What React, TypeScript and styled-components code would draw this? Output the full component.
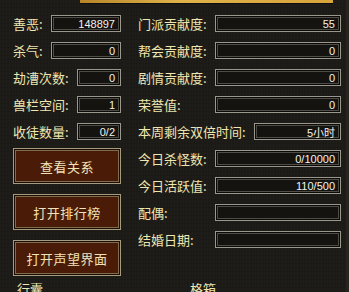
import { FunctionComponent } from "react";
import styled, { createGlobalStyle } from "styled-components";

const GlobalStyle = createGlobalStyle`
  html, body {
    margin: 0;
    padding: 0;
    background: #1b1a17;
  }
`;

const Panel = styled.div`
  width: 349px;
  height: 292px;
  overflow: hidden;
  position: relative;
  background-color: #1c1b18;
  background-image: repeating-linear-gradient(
      90deg,
      rgba(255, 255, 255, 0.012) 0px,
      rgba(255, 255, 255, 0.012) 1px,
      transparent 1px,
      transparent 3px
    ),
    repeating-linear-gradient(
      0deg,
      rgba(0, 0, 0, 0.08) 0px,
      rgba(0, 0, 0, 0.08) 1px,
      transparent 1px,
      transparent 4px
    );
  font-family: "Noto Sans CJK SC", "Noto Sans", sans-serif;
  font-size: 13px;
  color: #efe6b0;
  border-right: 3px solid #26241f;
  box-sizing: border-box;
`;

const TopStrip = styled.div`
  margin-left: 80px;
  width: 253px;
  height: 3px;
  background: linear-gradient(90deg, #b8862a, #e0b24a 40%, #d8a43c);
  border-bottom: 1px solid #0e0d0b;
`;

const Columns = styled.div`
  display: flex;
  gap: 17px;
  padding: 11px 0 0 13px;
`;

const LeftCol = styled.div`
  width: 108px;
  display: flex;
  flex-direction: column;
  gap: 8px;
`;

const RightCol = styled.div`
  width: 203px;
  display: flex;
  flex-direction: column;
  gap: 10px;
`;

const Stack = styled.div`
  display: flex;
  flex-direction: column;
  gap: 10px;
`;

const Row = styled.div`
  height: 17px;
  display: flex;
  align-items: center;
`;

const Label = styled.span<{ $min?: number }>`
  flex: none;
  min-width: ${(p) => (p.$min ? `${p.$min}px` : "auto")};
  padding-right: 8px;
  box-sizing: border-box;
  white-space: nowrap;
  line-height: 17px;
  color: #efe6b0;
`;

const ValueBox = styled.div`
  flex: 1;
  height: 17px;
  box-sizing: border-box;
  border: 1px solid #9a978c;
  background: #141310;
  box-shadow: inset 0 0 0 1px #0b0a09, inset 0 0 0 2px #4e4c45;
  display: flex;
  align-items: center;
  justify-content: flex-end;
  padding-right: 5px;
  font-family: "Liberation Sans", "Noto Sans CJK SC", sans-serif;
  font-size: 11px;
  color: #f2f2ee;
`;

const ActionButton = styled.button`
  height: 36px;
  width: 108px;
  box-sizing: border-box;
  border: 1px solid #a89b7c;
  background: #4a1c07;
  box-shadow: inset 0 0 0 1px #1c0d04, inset 0 0 0 2px #7e6c50;
  color: #f2e2b8;
  font-family: "Noto Sans CJK SC", sans-serif;
  font-size: 13px;
  letter-spacing: 0.5px;
  padding: 0;
  cursor: pointer;
`;

const Footer = styled.div`
  display: flex;
  padding: 4px 0 0 17px;
  line-height: 17px;
`;

const FooterLabel = styled.span<{ $w: number }>`
  width: ${(p) => p.$w}px;
  color: #efe6b0;
`;

const leftRows = [
  { label: "善恶:", value: "148897" },
  { label: "杀气:", value: "0" },
  { label: "劫漕次数:", value: "0" },
  { label: "兽栏空间:", value: "1" },
  { label: "收徒数量:", value: "0/2" },
];

const rightRows = [
  { label: "门派贡献度:", value: "55" },
  { label: "帮会贡献度:", value: "0" },
  { label: "剧情贡献度:", value: "0" },
  { label: "荣誉值:", value: "0" },
  { label: "本周剩余双倍时间:", value: "5小时" },
  { label: "今日杀怪数:", value: "0/10000" },
  { label: "今日活跃值:", value: "110/500" },
  { label: "配偶:", value: "" },
  { label: "结婚日期:", value: "" },
];

const buttons = ["查看关系", "打开排行榜", "打开声望界面"];

const App: FunctionComponent = () => {
  return (
    <Panel>
      <GlobalStyle />
      <TopStrip />
      <Columns>
        <LeftCol>
          <Stack>
            {leftRows.map((r) => (
              <Row key={r.label}>
                <Label>{r.label}</Label>
                <ValueBox>{r.value}</ValueBox>
              </Row>
            ))}
          </Stack>
          <Stack>
            {buttons.map((b) => (
              <ActionButton key={b}>{b}</ActionButton>
            ))}
          </Stack>
        </LeftCol>
        <RightCol>
          {rightRows.map((r) => (
            <Row key={r.label}>
              <Label $min={77}>{r.label}</Label>
              <ValueBox>{r.value}</ValueBox>
            </Row>
          ))}
        </RightCol>
      </Columns>
      <Footer>
        <FooterLabel $w={173}>行囊</FooterLabel>
        <FooterLabel $w={60}>格箱</FooterLabel>
      </Footer>
    </Panel>
  );
};

export default App;
